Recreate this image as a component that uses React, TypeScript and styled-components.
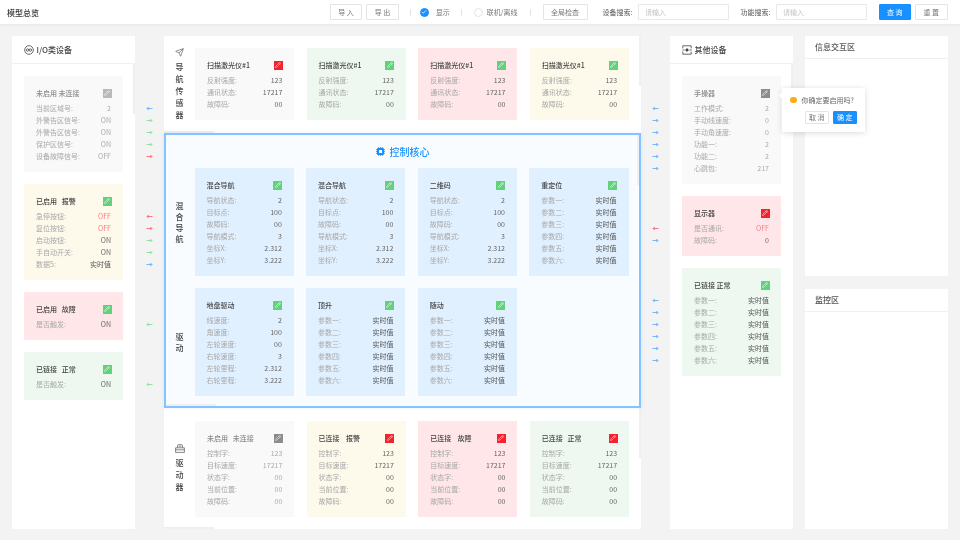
import React from 'react';
import styled, { createGlobalStyle } from 'styled-components';
import { Check, Send, Pencil } from 'lucide-react';

const GlobalStyle = createGlobalStyle`
  html, body {
    margin: 0;
    padding: 0;
    background: #f3f3f3;
    font-family: "Noto Sans CJK SC", "Noto Sans", sans-serif;
    font-size: 7px;
  }
  * {
    box-sizing: border-box;
  }
`;

const palette = {
  blue: '#1890ff',
  line: '#f0f0f0',
  label: '#a8a8a8',
  value: '#666666',
};

type Tone = 'gray' | 'yellow' | 'red' | 'green' | 'blue';
type BadgeTone = 'light' | 'gray' | 'red' | 'green';
type ArrowKind = 'left' | 'right';
type ArrowColor = 'blue' | 'green' | 'red';

const cardBg: Record<Tone, string> = {
  gray: '#f9f9f9',
  yellow: '#fdfaec',
  red: '#ffe6e8',
  green: '#eef8f0',
  blue: '#e1f0ff',
};

const badgeBg: Record<BadgeTone, string> = {
  light: '#b9b9b9',
  gray: '#8c8c8c',
  red: '#f5222d',
  green: '#60d27a',
};

const arrowColors: Record<ArrowColor, string> = {
  blue: '#6fb7ff',
  green: '#94e3a0',
  red: '#ff7582',
};

// the reference is a downscaled capture, its text has no hard edges
const Page = styled.div`
  width: 960px;
  height: 540px;
  overflow: hidden;
  filter: blur(0.3px);
`;

const Header = styled.header`
  display: flex;
  align-items: center;
  justify-content: space-between;
  height: 24px;
  padding: 0 12.5px 0 7px;
  background: #fff;
  box-shadow: 0 1px 3px rgba(0, 0, 0, 0.05);
`;

const PageTitle = styled.div`
  font-size: 8px;
  font-weight: 500;
  color: #333;
`;

const Toolbar = styled.div`
  display: flex;
  align-items: center;
  color: #777;
`;

const Button = styled.button<{ $primary?: boolean; $width?: number; $after?: number }>`
  width: ${(p) => p.$width || 32.5}px;
  height: 16px;
  margin: 0 ${(p) => p.$after || 0}px 0 0;
  padding: 0;
  border: 1px solid ${(p) => (p.$primary ? palette.blue : '#e4e4e4')};
  border-radius: 1px;
  background: ${(p) => (p.$primary ? palette.blue : '#fff')};
  color: ${(p) => (p.$primary ? '#fff' : '#777')};
  font: inherit;
  white-space: pre;
`;

const Sep = styled.span<{ $before: number; $after: number }>`
  width: 1px;
  height: 7px;
  margin: 0 ${(p) => p.$after}px 0 ${(p) => p.$before}px;
  background: #e2e2e2;
`;

const RadioItem = styled.label<{ $gap: number }>`
  display: flex;
  align-items: center;
  gap: ${(p) => p.$gap}px;
`;

const Radio = styled.span<{ $on?: boolean }>`
  display: flex;
  align-items: center;
  justify-content: center;
  width: 9px;
  height: 9px;
  border-radius: 50%;
  border: 1px solid ${(p) => (p.$on ? palette.blue : '#e3e3e3')};
  background: ${(p) => (p.$on ? palette.blue : '#fff')};
`;

const Search = styled.div<{ $after: number }>`
  display: flex;
  align-items: center;
  gap: 5.5px;
  margin-right: ${(p) => p.$after}px;
  color: #555;
`;

const SearchInput = styled.div`
  width: 90.5px;
  height: 16px;
  padding-left: 6px;
  border: 1px solid #e8e8e8;
  border-radius: 1px;
  background: #fff;
  color: #c4c4c4;
  line-height: 14px;
`;

const Main = styled.main`
  display: flex;
  height: 516px;
  padding: 12px 12px 11px;
`;

const Panel = styled.section`
  position: relative;
  display: flex;
  flex-direction: column;
  flex: 0 0 123px;
  background: #fff;
`;

const PanelHead = styled.div`
  display: flex;
  align-items: center;
  gap: 3px;
  height: 28px;
  padding-left: 11.5px;
  border-bottom: 1px solid ${palette.line};
  font-size: 8px;
  font-weight: 500;
  color: #444;
`;

const PanelBody = styled.div`
  display: flex;
  flex-direction: column;
  gap: 12px;
  padding: 12px;
`;

const ScrollThumb = styled.span<{ $axis: 'x' | 'y'; $top?: number }>`
  position: absolute;
  background: #efefef;
  ${(p) =>
    p.$axis === 'y'
      ? `top: ${p.$top || 0}px; right: 0; width: 2px; height: 50px;`
      : 'left: 0; bottom: 0; width: 50px; height: 2px;'}
`;

const ArrowCol = styled.div`
  display: flex;
  flex-direction: column;
  flex: 0 0 29px;
  padding-top: 66px;
`;

const ArrowGroup = styled.div`
  margin-bottom: 48px;
`;

const ArrowRow = styled.div`
  display: flex;
  align-items: center;
  justify-content: center;
  height: 12px;
`;

const Center = styled.div`
  display: flex;
  flex-direction: column;
  flex: 0 0 477px;
  background: #fff;
`;

const Section = styled.div<{ $height: number }>`
  position: relative;
  display: flex;
  flex: 0 0 ${(p) => p.$height}px;
`;

const SideLabel = styled.div`
  display: flex;
  flex: 0 0 31px;
  flex-direction: column;
  align-items: center;
  justify-content: center;
  gap: 3px;
  padding-bottom: 2px;
  font-size: 8px;
  line-height: 9px;
  font-weight: 500;
  color: #444;

  & > svg {
    margin-bottom: 2px;
  }
`;

const CardGrid = styled.div<{ $top: number }>`
  display: grid;
  grid-template-columns: repeat(4, 99.3px);
  column-gap: 12.3px;
  align-items: start;
  padding-top: ${(p) => p.$top}px;
`;

const Core = styled.div`
  position: relative;
  flex: 0 0 275px;
  border: 2px solid #85c2ff;
  background: #f9fcff;
  box-shadow: 0 0 4px rgba(24, 144, 255, 0.12);
  z-index: 1;
`;

const CoreTitle = styled.div`
  display: flex;
  align-items: center;
  justify-content: center;
  gap: 5px;
  height: 33px;
  font-size: 10px;
  font-weight: 500;
  color: ${palette.blue};
`;

const CoreRows = styled.div`
  display: flex;
  flex-direction: column;
  gap: 12px;
`;

const CoreRow = styled.div`
  display: flex;
`;

const CoreSide = styled(SideLabel)`
  flex-basis: 28.5px;
  gap: 2px;
  padding: 0 1.5px 0 0;
`;

const Card = styled.div<{ $tone: Tone; $muted?: boolean }>`
  padding: 11px 12px 10px;
  background: ${(p) => cardBg[p.$tone]};
  color: ${(p) => (p.$muted ? '#aaa' : palette.value)};
`;

const CardHead = styled.div<{ $muted?: boolean }>`
  display: flex;
  align-items: center;
  justify-content: space-between;
  height: 12px;
  margin-bottom: 3px;
  font-weight: 500;
  white-space: pre;
  color: ${(p) => (p.$muted ? '#8a8a8a' : '#444')};
`;

const Badge = styled.span<{ $tone: BadgeTone }>`
  display: flex;
  align-items: center;
  justify-content: center;
  width: 9px;
  height: 9px;
  background: ${(p) => badgeBg[p.$tone]};
  margin-right: -0.5px;
`;

const Row = styled.div`
  display: flex;
  justify-content: space-between;
  height: 12px;
  line-height: 12px;
`;

const RowLabel = styled.span`
  color: ${palette.label};
`;

const RowValue = styled.span<{ $alert?: boolean; $strong?: boolean }>`
  color: ${(p) => (p.$alert ? '#ff7a80' : p.$strong ? '#555' : 'inherit')};
`;

const RightCol = styled.div`
  display: flex;
  flex-direction: column;
  flex: 0 0 143px;
  margin-left: 12px;
  gap: 13px;
`;

const InfoPanel = styled.section`
  flex: 1;
  background: #fff;
`;

const InfoHead = styled.div`
  height: 23px;
  padding-left: 10px;
  border-bottom: 1px solid ${palette.line};
  font-size: 8px;
  font-weight: 500;
  line-height: 22px;
  color: #555;
`;

const Popover = styled.div`
  position: absolute;
  top: 52px;
  left: 112px;
  width: 83px;
  height: 44px;
  padding: 6px 8px 0 8px;
  background: #fff;
  box-shadow: 0 1px 6px rgba(0, 0, 0, 0.15);
  color: #666;
  z-index: 2;

  &::before {
    content: '';
    position: absolute;
    top: 5px;
    left: -2px;
    width: 5px;
    height: 5px;
    background: #fff;
    transform: rotate(45deg);
  }
`;

const PopoverText = styled.div`
  display: flex;
  align-items: center;
  gap: 5px;
  height: 12px;
  white-space: nowrap;
`;

const WarnDot = styled.span`
  flex: 0 0 6.5px;
  height: 6.5px;
  border-radius: 50%;
  background: #faad14;
`;

const PopoverActions = styled.div`
  display: flex;
  justify-content: flex-end;
  gap: 3.5px;
  margin-top: 5px;
`;

const PopButton = styled(Button)`
  width: 24.5px;
  height: 12.5px;
  line-height: 10px;
`;

type RowData = [string, string];

type CardData = {
  title: string;
  tone: Tone;
  badge: BadgeTone;
  muted?: boolean;
  rows: RowData[];
};

const Arrow = ({ dir, color }: { dir: ArrowKind; color: ArrowColor }) => (
  <svg width="7" height="5" viewBox="0 0 7 5" style={{ transform: dir === 'left' ? 'scaleX(-1)' : undefined }}>
    <path d="M0.5 2.5H5" stroke={arrowColors[color]} strokeWidth="1" />
    <path d="M4.2 0.7L6.8 2.5L4.2 4.3Z" fill={arrowColors[color]} />
  </svg>
);

const IoIcon = () => (
  <svg width="10" height="10" viewBox="0 0 10 10" fill="none" stroke="#444" strokeWidth="0.8">
    <circle cx="5" cy="5" r="4.3" />
    <circle cx="3.6" cy="5" r="1.2" />
    <circle cx="6.4" cy="5" r="1.2" />
  </svg>
);

const DeviceIcon = () => (
  <svg width="10" height="10" viewBox="0 0 10 10" fill="none" stroke="#444" strokeWidth="0.8">
    <path d="M0.8 3.4V0.8H9.2V3.4M0.8 6.6V9.2H9.2V6.6" />
    <path d="M0.4 5H2.6M7.4 5H9.6" />
    <circle cx="5" cy="5" r="1.2" fill="#444" />
  </svg>
);

const DriverIcon = () => (
  <svg width="10" height="9" viewBox="0 0 10 9" fill="none" stroke="#555" strokeWidth="0.7">
    <path d="M2.5 3.6V1.6Q2.5 0.6 3.5 0.6H6.5Q7.5 0.6 7.5 1.6V3.6" />
    <path d="M0.6 3.8H9.4V8.4H0.6ZM0.6 5.8H9.4M3.6 2.2H6.4" />
  </svg>
);

const ChipIcon = () => (
  <svg width="9" height="9" viewBox="0 0 9 9" fill="none">
    <rect x="1" y="1" width="7" height="7" rx="1" fill="#1890ff" />
    <rect x="3" y="3" width="3" height="3" fill="#f9fcff" />
    <path d="M2.7 0V9M4.5 0V9M6.3 0V9M0 2.7H9M0 4.5H9M0 6.3H9" stroke="#1890ff" strokeWidth="0.8" strokeDasharray="1.2 6.6" />
  </svg>
);

const DeviceCard = ({ data }: { data: CardData }) => (
  <Card $tone={data.tone} $muted={data.muted}>
    <CardHead $muted={data.muted}>
      {data.title}
      <Badge $tone={data.badge}>
        <Pencil size={6} color="#fff" strokeWidth={2} />
      </Badge>
    </CardHead>
    {data.rows.map(([label, value], index) => (
      <Row key={index}>
        <RowLabel>{label}</RowLabel>
        <RowValue $alert={value === 'OFF' && data.tone !== 'gray'} $strong={value === '实时值'}>
          {value}
        </RowValue>
      </Row>
    ))}
  </Card>
);

const scanRows: RowData[] = [
  ['反射强度:', '123'],
  ['通讯状态:', '17217'],
  ['故障码:', '00'],
];

const navRows: RowData[] = [
  ['导航状态:', '2'],
  ['目标点:', '100'],
  ['故障码:', '00'],
  ['导航模式:', '3'],
  ['坐标X:', '2.312'],
  ['坐标Y:', '3.222'],
];

const paramRows: RowData[] = ['一', '二', '三', '四', '五', '六'].map((n) => [`参数${n}:`, '实时值']);

const chassisRows: RowData[] = [
  ['线速度:', '2'],
  ['角速度:', '100'],
  ['左轮速度:', '00'],
  ['右轮速度:', '3'],
  ['左轮里程:', '2.312'],
  ['右轮里程:', '3.222'],
];

const driverRows: RowData[] = [
  ['控制字:', '123'],
  ['目标速度:', '17217'],
  ['状态字:', '00'],
  ['当前位置:', '00'],
  ['故障码:', '00'],
];

const ioCards: CardData[] = [
  {
    title: '未启用 未连接',
    tone: 'gray',
    badge: 'light',
    muted: true,
    rows: [
      ['当前区域号:', '2'],
      ['外警告区信号:', 'ON'],
      ['外警告区信号:', 'ON'],
      ['保护区信号:', 'ON'],
      ['设备故障信号:', 'OFF'],
    ],
  },
  {
    title: '已启用   报警',
    tone: 'yellow',
    badge: 'green',
    rows: [
      ['急停按钮:', 'OFF'],
      ['复位按钮:', 'OFF'],
      ['启动按钮:', 'ON'],
      ['手自动开关:', 'ON'],
      ['数据5:', '实时值'],
    ],
  },
  { title: '已启用   故障', tone: 'red', badge: 'green', rows: [['是否触发:', 'ON']] },
  { title: '已链接   正常', tone: 'green', badge: 'green', rows: [['是否触发:', 'ON']] },
];

const ioArrows: [ArrowKind, ArrowColor][][] = [
  [['left', 'blue'], ['right', 'green'], ['right', 'green'], ['right', 'green'], ['right', 'red']],
  [['left', 'red'], ['right', 'red'], ['right', 'green'], ['right', 'green'], ['right', 'blue']],
  [['left', 'green']],
  [['left', 'green']],
];

const otherArrows: [ArrowKind, ArrowColor][][] = [
  [['left', 'blue'], ['right', 'blue'], ['right', 'blue'], ['right', 'blue'], ['right', 'blue'], ['right', 'blue']],
  [['left', 'red'], ['right', 'blue']],
  [['left', 'blue'], ['right', 'blue'], ['right', 'blue'], ['right', 'blue'], ['right', 'blue'], ['right', 'blue']],
];

const otherCards: CardData[] = [
  {
    title: '手操器',
    tone: 'gray',
    badge: 'gray',
    muted: true,
    rows: [
      ['工作模式:', '2'],
      ['手动线速度:', '0'],
      ['手动角速度:', '0'],
      ['功能一:', '2'],
      ['功能二:', '2'],
      ['心跳包:', '217'],
    ],
  },
  {
    title: '显示器',
    tone: 'red',
    badge: 'red',
    rows: [
      ['是否通讯:', 'OFF'],
      ['故障码:', '0'],
    ],
  },
  { title: '已链接 正常', tone: 'green', badge: 'green', rows: paramRows },
];

const sensorCards: CardData[] = [
  { title: '扫描激光仪#1', tone: 'gray', badge: 'red', rows: scanRows },
  { title: '扫描激光仪#1', tone: 'green', badge: 'green', rows: scanRows },
  { title: '扫描激光仪#1', tone: 'red', badge: 'green', rows: scanRows },
  { title: '扫描激光仪#1', tone: 'yellow', badge: 'green', rows: scanRows },
];

const mixedCards: CardData[] = [
  { title: '混合导航', tone: 'blue', badge: 'green', rows: navRows },
  { title: '混合导航', tone: 'blue', badge: 'green', rows: navRows },
  { title: '二维码', tone: 'blue', badge: 'green', rows: navRows },
  { title: '重定位', tone: 'blue', badge: 'green', rows: paramRows },
];

const driveCards: CardData[] = [
  { title: '地盘驱动', tone: 'blue', badge: 'green', rows: chassisRows },
  { title: '顶升', tone: 'blue', badge: 'green', rows: paramRows },
  { title: '随动', tone: 'blue', badge: 'green', rows: paramRows },
];

const driverCards: CardData[] = [
  { title: '未启用   未连接', tone: 'gray', badge: 'gray', muted: true, rows: driverRows },
  { title: '已连接    报警', tone: 'yellow', badge: 'red', rows: driverRows },
  { title: '已连接    故障', tone: 'red', badge: 'red', rows: driverRows },
  { title: '已连接   正常', tone: 'green', badge: 'red', rows: driverRows },
];

const ArrowColumn = ({ groups }: { groups: [ArrowKind, ArrowColor][][] }) => (
  <ArrowCol>
    {groups.map((group, i) => (
      <ArrowGroup key={i}>
        {group.map(([dir, color], j) => (
          <ArrowRow key={j}>
            <Arrow dir={dir} color={color} />
          </ArrowRow>
        ))}
      </ArrowGroup>
    ))}
  </ArrowCol>
);

export default function App() {
  return (
    <Page>
      <GlobalStyle />
      <Header>
        <PageTitle>模型总览</PageTitle>
        <Toolbar>
          <Button $after={4}>导 入</Button>
          <Button>导 出</Button>
          <Sep $before={11} $after={9} />
          <RadioItem $gap={7}>
            <Radio $on>
              <Check size={6} color="#fff" strokeWidth={3} />
            </Radio>
            显示
          </RadioItem>
          <Sep $before={11} $after={12} />
          <RadioItem $gap={4}>
            <Radio />
            联机/离线
          </RadioItem>
          <Sep $before={12} $after={12} />
          <Button $width={45} $after={15}>全局检查</Button>
          <Search $after={12}>
            设备搜索:
            <SearchInput>请输入</SearchInput>
          </Search>
          <Search $after={12}>
            功能搜索:
            <SearchInput>请输入</SearchInput>
          </Search>
          <Button $primary $after={4}>查 询</Button>
          <Button>重 置</Button>
        </Toolbar>
      </Header>
      <Main>
        <Panel>
          <PanelHead>
            <IoIcon />
            I/O类设备
          </PanelHead>
          <PanelBody>
            {ioCards.map((card, i) => (
              <DeviceCard key={i} data={card} />
            ))}
          </PanelBody>
          <ScrollThumb $axis="y" $top={28} />
        </Panel>
        <ArrowColumn groups={ioArrows} />
        <Center>
          <Section $height={97}>
            <SideLabel>
              <Send size={9} color="#444" strokeWidth={1.5} />
              <span>导</span>
              <span>航</span>
              <span>传</span>
              <span>感</span>
              <span>器</span>
            </SideLabel>
            <CardGrid $top={12}>
              {sensorCards.map((card, i) => (
                <DeviceCard key={i} data={card} />
              ))}
            </CardGrid>
            <ScrollThumb $axis="y" />
            <ScrollThumb $axis="x" />
          </Section>
          <Core>
            <CoreTitle>
              <ChipIcon />
              控制核心
            </CoreTitle>
            <CoreRows>
              <CoreRow>
                <CoreSide>
                  <span>混</span>
                  <span>合</span>
                  <span>导</span>
                  <span>航</span>
                </CoreSide>
                <CardGrid $top={0}>
                  {mixedCards.map((card, i) => (
                    <DeviceCard key={i} data={card} />
                  ))}
                </CardGrid>
              </CoreRow>
              <CoreRow>
                <CoreSide>
                  <span>驱</span>
                  <span>动</span>
                </CoreSide>
                <CardGrid $top={0}>
                  {driveCards.map((card, i) => (
                    <DeviceCard key={i} data={card} />
                  ))}
                </CardGrid>
              </CoreRow>
            </CoreRows>
            <ScrollThumb $axis="y" />
            <ScrollThumb $axis="x" />
          </Core>
          <Section $height={121}>
            <SideLabel>
              <DriverIcon />
              <span>驱</span>
              <span>动</span>
              <span>器</span>
            </SideLabel>
            <CardGrid $top={13}>
              {driverCards.map((card, i) => (
                <DeviceCard key={i} data={card} />
              ))}
            </CardGrid>
            <ScrollThumb $axis="y" />
            <ScrollThumb $axis="x" />
          </Section>
        </Center>
        <ArrowColumn groups={otherArrows} />
        <Panel>
          <PanelHead>
            <DeviceIcon />
            其他设备
          </PanelHead>
          <PanelBody>
            {otherCards.map((card, i) => (
              <DeviceCard key={i} data={card} />
            ))}
          </PanelBody>
          <ScrollThumb $axis="y" $top={28} />
          <Popover>
            <PopoverText>
              <WarnDot />
              你确定要启用吗?
            </PopoverText>
            <PopoverActions>
              <PopButton>取 消</PopButton>
              <PopButton $primary>确 定</PopButton>
            </PopoverActions>
          </Popover>
        </Panel>
        <RightCol>
          <InfoPanel>
            <InfoHead>信息交互区</InfoHead>
          </InfoPanel>
          <InfoPanel>
            <InfoHead>监控区</InfoHead>
          </InfoPanel>
        </RightCol>
      </Main>
    </Page>
  );
}
